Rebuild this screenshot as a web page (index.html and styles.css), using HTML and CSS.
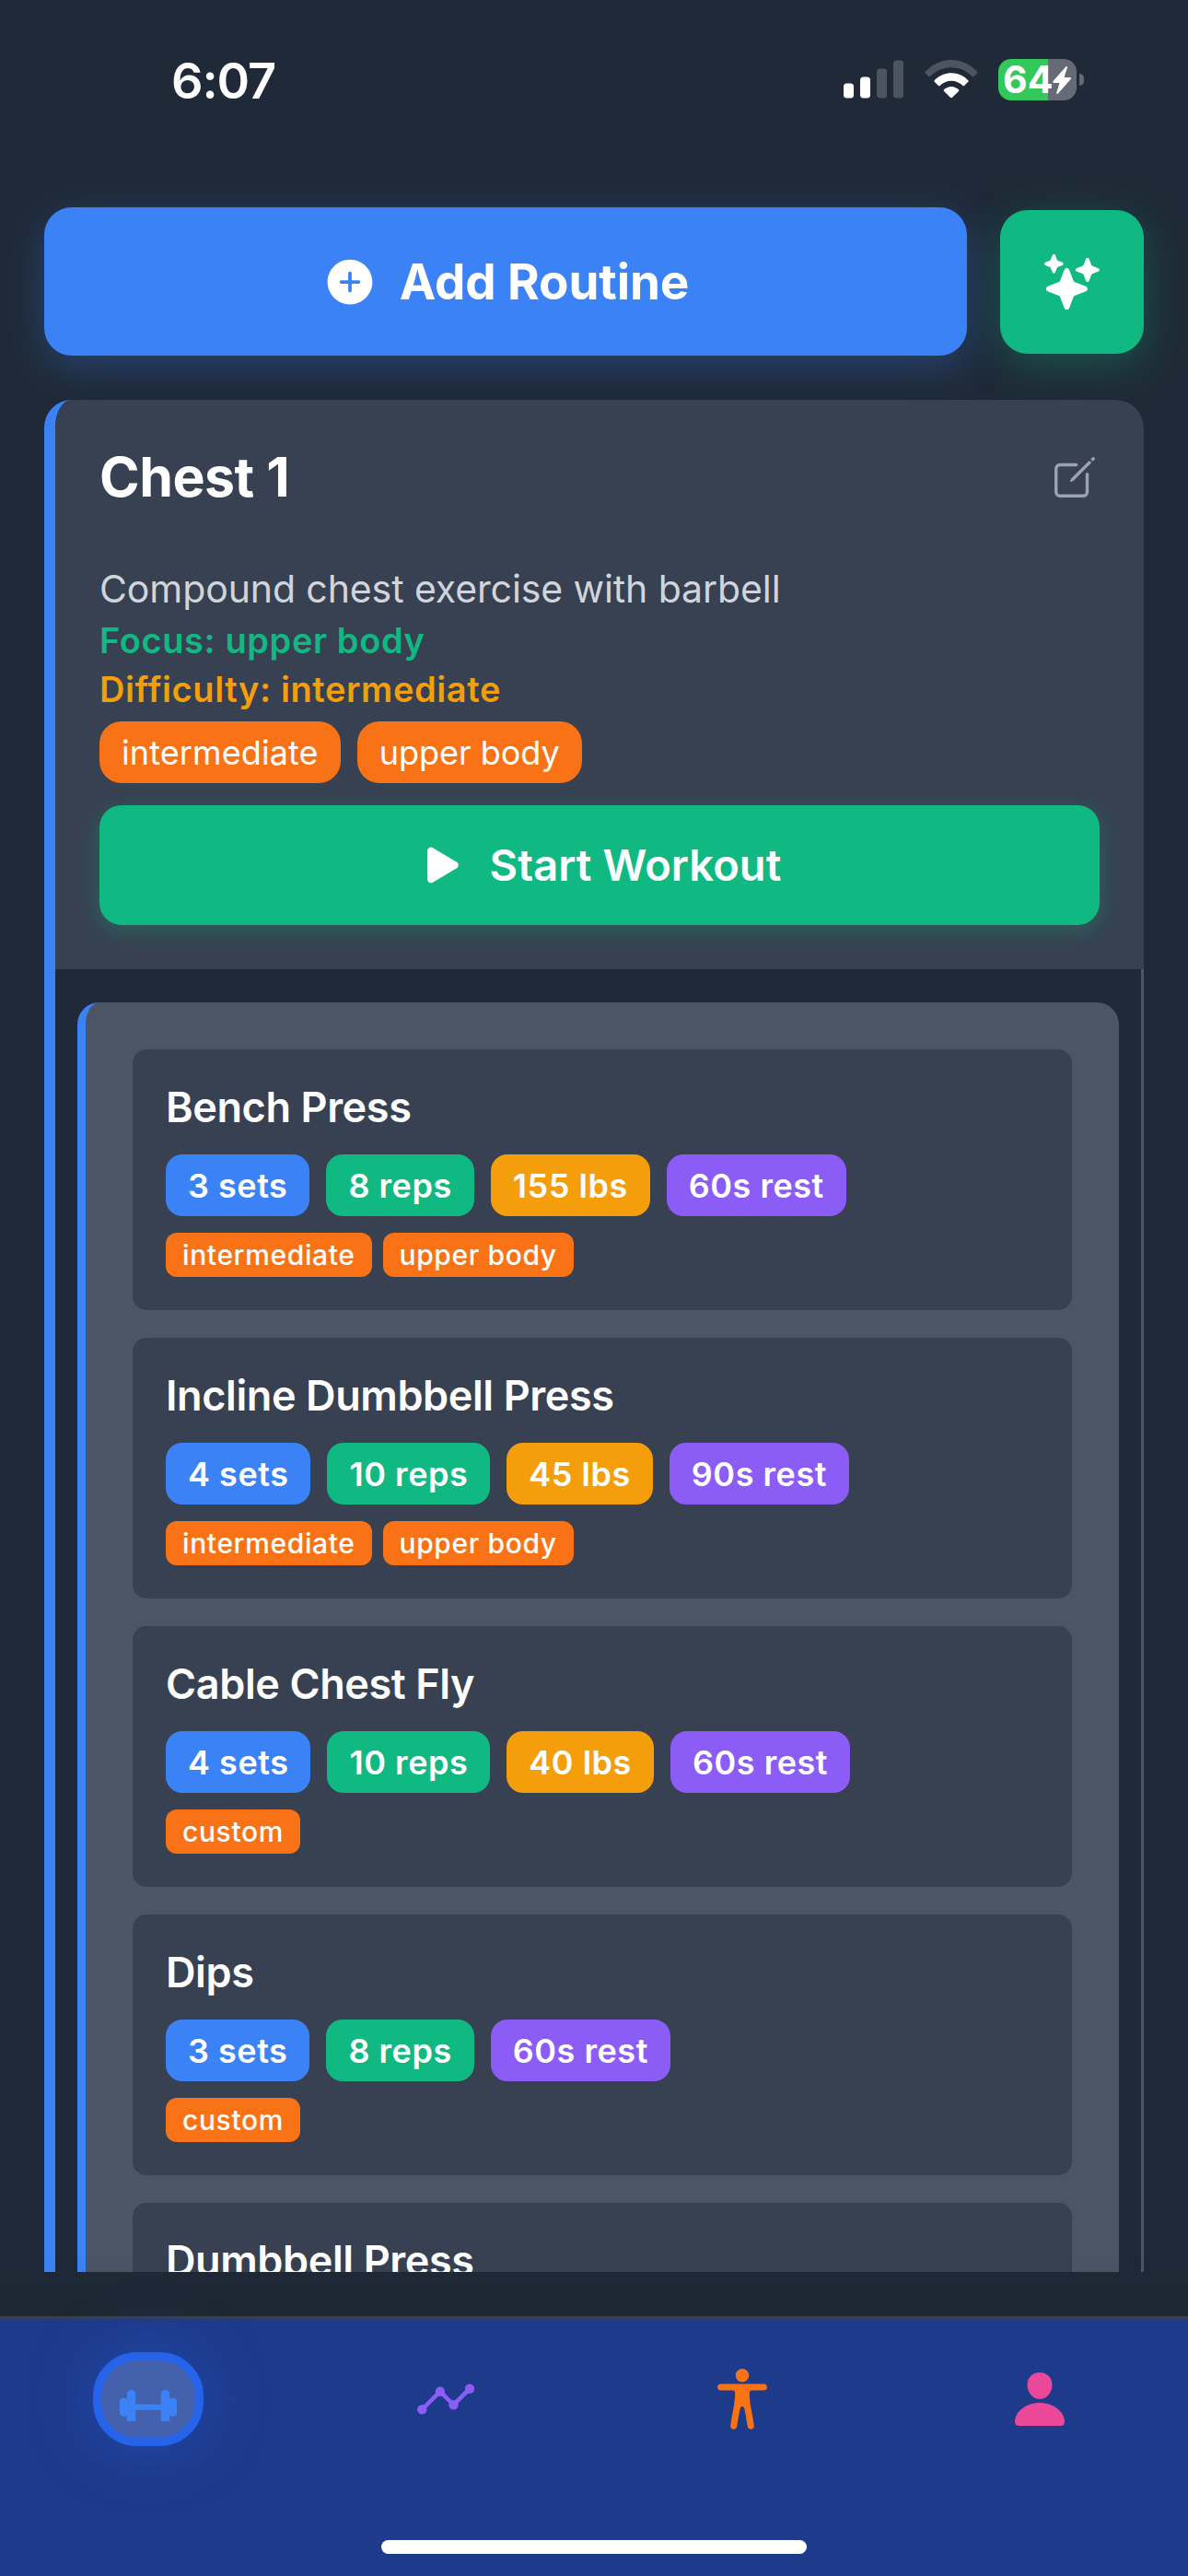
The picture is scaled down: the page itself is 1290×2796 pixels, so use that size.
FILE: index.html
```html
<!DOCTYPE html>
<html lang="en">
<head>
<meta charset="utf-8">
<title>Routines</title>
<link rel="stylesheet" href="styles.css">
</head>
<body>
<div class="screen">
  <header class="status">
    <span class="time">6:07</span>
    <div class="indicators">
      <svg class="signal" viewBox="0 0 66 42"><g fill="#fff"><rect y="25.500" width="11" height="16" rx="3.500"/><rect x="18" y="18.500" width="11" height="23" rx="3.500"/></g><g fill="#4b545f"><rect x="36" y="9.500" width="11" height="32" rx="3.500"/><rect x="54" y="0.500" width="11" height="41" rx="3.500"/></g></svg>
      <svg class="wifi" viewBox="0 0 58 43"><path fill="#4b545f" d="M.8 13.800C8.300 5.800 18.200 1 29 1s20.700 4.800 28.200 12.800c.5.600.5 1.200 0 1.700l-3.700 3.600c-.5.500-1.100.5-1.600 0C45.800 12.800 37.800 9.200 29 9.200S12.200 12.800 6.100 19.100c-.5.500-1.100.5-1.600 0L.8 15.500c-.5-.5-.5-1.100 0-1.700z"/><path fill="#fff" d="M10.700 23.200C15.500 18.300 21.900 15.300 29 15.300s13.500 3 18.300 7.900c.5.500.5 1.100 0 1.600L43 29c-.5.500-1.100.5-1.600 0-3.300-3.300-7.600-5.300-12.400-5.300s-9.100 2-12.400 5.300c-.5.500-1.100.5-1.600 0l-4.300-4.200c-.5-.5-.5-1.100 0-1.600z"/><path fill="#fff" d="M21 33.300c2.100-2 4.900-3.300 8-3.300s5.900 1.300 8 3.300c.5.500.5 1.100 0 1.600l-7.200 7c-.5.500-1.100.5-1.600 0l-7.200-7c-.5-.5-.5-1.100 0-1.600z"/></svg>
      <div class="battery">
        <div class="cell">
          <span class="level">64</span>
          <svg class="bolt" viewBox="0 0 20 30"><path fill="#fff" d="M14.300.6.600 16.100c-.8 1-.4 1.900.8 1.900h6.100L4.300 28.600c-.4 1.300.7 1.800 1.600.8L19.500 14c.8-1 .4-1.900-.8-1.900h-6.200L15.900 1.400C16.300.2 15.200-.4 14.300.6z"/></svg>
        </div>
        <div class="nub"></div>
      </div>
    </div>
  </header>

  <div class="actions">
    <div class="add">
      <svg class="add-icon" viewBox="0 0 512 512"><path fill="#fff" fill-rule="evenodd" d="M256 48C141.310 48 48 141.310 48 256s93.310 208 208 208 208-93.310 208-208S370.690 48 256 48zm80 224h-64v64a16 16 0 01-32 0v-64h-64a16 16 0 010-32h64v-64a16 16 0 0132 0v64h64a16 16 0 010 32z"/></svg>
      <span class="add-label">Add Routine</span>
    </div>
    <div class="ai">
      <svg class="ai-icon" viewBox="0 0 512 512"><path fill="#fff" d="M208 512a24.840 24.840 0 01-23.340-16l-39.840-103.600a16.060 16.060 0 00-9.190-9.190L32 343.340a25 25 0 010-46.680l103.600-39.840a16.060 16.060 0 009.190-9.190L184.660 144a25 25 0 0146.680 0l39.840 103.600a16.060 16.060 0 009.190 9.190l103 39.630A25.490 25.490 0 01400 320.520a24.820 24.820 0 01-16 22.820l-103.600 39.840a16.060 16.060 0 00-9.190 9.190L231.340 496A24.840 24.840 0 01208 512zM88 176a14.670 14.670 0 01-13.690-9.400l-16.860-43.840a7.280 7.280 0 00-4.210-4.210L9.400 101.690a14.670 14.670 0 010-27.380l43.840-16.860a7.310 7.310 0 004.210-4.210L74.160 9.790A15 15 0 0186.230.11a14.670 14.670 0 0115.460 9.290l16.860 43.840a7.310 7.310 0 004.210 4.210l43.840 16.860a14.670 14.670 0 010 27.380l-43.840 16.860a7.280 7.280 0 00-4.210 4.210l-16.860 43.840A14.670 14.670 0 0188 176zM400 256a16 16 0 01-14.930-10.260l-22.840-59.370a8 8 0 00-4.600-4.600l-59.370-22.840a16 16 0 010-29.860l59.370-22.840a8 8 0 004.600-4.600l22.670-58.950a16.450 16.450 0 0113.170-10.570 16 16 0 0116.860 10.150l22.840 59.370a8 8 0 004.600 4.600l59.370 22.840a16 16 0 010 29.860l-59.370 22.840a8 8 0 00-4.600 4.600l-22.840 59.370A16 16 0 01400 256z"/></svg>
    </div>
  </div>

  <main class="scroller">
    <section class="routine">
      <div class="summary">
        <div class="heading">
          <h1 class="name">Chest 1</h1>
          <svg class="edit" viewBox="0 0 512 512"><path fill="none" stroke="#9ca3af" stroke-width="32" stroke-linecap="round" stroke-linejoin="round" d="M384 224v184a40 40 0 01-40 40H104a40 40 0 01-40-40V168a40 40 0 0140-40h167.480"/><path fill="#9ca3af" d="M459.940 53.250a16.060 16.060 0 00-23.220-.56L424.350 65a8 8 0 000 11.310l11.340 11.320a8 8 0 0011.340 0l12.060-12c6.100-6.090 6.670-16.010.85-22.380zM399.340 90L218.820 270.200a9 9 0 00-2.310 3.930L208.160 299a3.910 3.910 0 004.860 4.860l24.850-8.350a9 9 0 003.930-2.310L422 112.660a9 9 0 000-12.660l-9.950-10a9 9 0 00-12.710 0z"/></svg>
        </div>
        <p class="description">Compound chest exercise with barbell</p>
        <p class="meta focus">Focus: upper body</p>
        <p class="meta difficulty">Difficulty: intermediate</p>
        <div class="labels"><span class="label">intermediate</span><span class="label">upper body</span></div>
        <div class="start">
          <svg class="play" viewBox="0 0 512 512"><path fill="#fff" d="M133 440a35.370 35.370 0 01-17.500-4.670c-12-6.800-19.460-20-19.460-34.330V111c0-14.370 7.460-27.530 19.460-34.330a35.130 35.130 0 0135.770.45l247.850 148.360a36 36 0 010 61l-247.890 148.400A35.500 35.500 0 01133 440z"/></svg>
          <span class="start-label">Start Workout</span>
        </div>
      </div>
      <div class="body">
        <div class="exercises">
          <article class="exercise">
            <h2 class="title">Bench Press</h2>
            <div class="chips"><span class="chip sets">3 sets</span><span class="chip reps">8 reps</span><span class="chip weight">155 lbs</span><span class="chip rest">60s rest</span></div>
            <div class="tags"><span class="tag">intermediate</span><span class="tag">upper body</span></div>
          </article>
          <article class="exercise">
            <h2 class="title">Incline Dumbbell Press</h2>
            <div class="chips"><span class="chip sets">4 sets</span><span class="chip reps">10 reps</span><span class="chip weight">45 lbs</span><span class="chip rest">90s rest</span></div>
            <div class="tags"><span class="tag">intermediate</span><span class="tag">upper body</span></div>
          </article>
          <article class="exercise">
            <h2 class="title">Cable Chest Fly</h2>
            <div class="chips"><span class="chip sets">4 sets</span><span class="chip reps">10 reps</span><span class="chip weight">40 lbs</span><span class="chip rest">60s rest</span></div>
            <div class="tags"><span class="tag">custom</span></div>
          </article>
          <article class="exercise">
            <h2 class="title">Dips</h2>
            <div class="chips"><span class="chip sets">3 sets</span><span class="chip reps">8 reps</span><span class="chip rest">60s rest</span></div>
            <div class="tags"><span class="tag">custom</span></div>
          </article>
          <article class="exercise">
            <h2 class="title">Dumbbell Press</h2>
          </article>
        </div>
      </div>
    </section>
  </main>

  <nav class="tabbar">
    <div class="tabs">
      <div class="tab"><div class="active">
        <svg class="dumbbell" viewBox="0 0 62 34"><g fill="#3b82f6"><rect y="8.700" width="9" height="20" rx="4"/><path d="M7.700 34V4.700a4.800 4.800 0 019.600 0V34zM44.700 34V4.700a4.800 4.800 0 019.600 0V34z"/><path d="M5 12h5v14H5zM52 12h5v14h-5zM17 15.700h28v6H17z"/><rect x="53" y="8.700" width="9" height="20" rx="4"/></g></svg>
      </div></div>
      <div class="tab"><svg class="tab-icon" viewBox="0 0 72 72"><g fill="#8b5cf6"><circle cx="10.300" cy="47.300" r="5.200"/><circle cx="29.900" cy="27.700" r="5.200"/><circle cx="44.500" cy="42.200" r="5.200"/><circle cx="62" cy="24.700" r="5.200"/></g><path d="M10.300 47.300 29.900 27.700 44.500 42.200 62 24.700" fill="none" stroke="#8b5cf6" stroke-width="4.500"/></svg></div>
      <div class="tab"><svg class="tab-icon" viewBox="0 0 72 72"><g fill="#f97316"><circle cx="36" cy="10.300" r="7.200"/><path d="M12.700 19.400h46.600a3.600 3.600 0 010 7.200H46.500c-1.900 0-2.700 1.300-2.700 3.200 0 11 3.300 21.600 5 35.300a3.500 3.500 0 01-6.900 1L39 49.500c-.7-4-1.600-5.400-3-5.400s-2.300 1.400-3 5.400l-2.900 16.600a3.500 3.500 0 01-6.900-1c1.700-13.700 5-24.300 5-35.300 0-1.900-.8-3.200-2.700-3.200H12.700a3.600 3.600 0 010-7.200z"/></g></svg></div>
      <div class="tab"><svg class="tab-icon" viewBox="0 0 72 72"><g fill="#ec4899"><path d="M36 7c7.600 0 13.500 5.600 13.500 13.400C49.500 28.700 43.400 36 36 36s-13.500-7.300-13.500-15.600C22.500 12.600 28.400 7 36 7z"/><path d="M36 40c15.500 0 27 10.500 27 20.500 0 3-1.700 4.500-4.500 4.500h-45C10.700 65 9 63.500 9 60.500 9 50.500 20.500 40 36 40z"/></g></svg></div>
    </div>
    <div class="home-indicator"></div>
  </nav>
</div>
</body>
</html>
```
FILE: styles.css
```css
* { box-sizing: border-box; margin: 0; padding: 0; }
body {
  width: 1290px;
  height: 2796px;
  overflow: hidden;
  background: #1f2937;
  color: #fff;
  font-family: Inter, "Liberation Sans", sans-serif;
}
svg { display: block; flex: none; }
span, h1, h2, p { white-space: nowrap; }
.screen { display: flex; flex-direction: column; height: 2796px; }

/* status bar */
.status {
  display: flex;
  justify-content: space-between;
  align-items: flex-start;
  height: 225px;
  padding: 64px 113px 0 186px;
}
.time { font-size: 54px; line-height: 48px; font-weight: 600; letter-spacing: -1.1px; }
.indicators { display: flex; align-items: flex-start; }
.signal { width: 66px; height: 42px; margin: 1px 22px 0 0; }
.wifi { width: 58px; height: 43px; margin-right: 22px; }
.battery { display: flex; align-items: center; gap: 3px; }
.cell {
  display: flex;
  align-items: center;
  width: 85px;
  height: 45px;
  padding-left: 5px;
  border-radius: 14px;
  background: linear-gradient(90deg, #34c759 54px, #656b76 54px);
}
.level { width: 54px; font-size: 41px; line-height: 45px; font-weight: 700; }
.bolt { width: 20px; height: 30px; }
.nub { width: 5px; height: 13px; border-radius: 0 5px 5px 0; background: #656b76; }

/* top actions */
.actions { display: flex; align-items: center; gap: 36px; height: 161px; margin: 0 48px 48px; }
.add {
  display: flex;
  flex: 1;
  align-items: center;
  justify-content: center;
  gap: 24px;
  height: 161px;
  border-radius: 30px;
  background: #3b82f6;
  box-shadow: 0 12px 48px rgba(59, 130, 246, 0.3);
}
.add-icon { width: 60px; height: 60px; }
.add-label { font-size: 53px; line-height: 64px; font-weight: 700; letter-spacing: -0.1px; }
.ai {
  display: flex;
  align-items: center;
  justify-content: center;
  width: 156px;
  height: 156px;
  border-radius: 30px;
  background: #10b981;
  box-shadow: 0 12px 48px rgba(16, 185, 129, 0.3);
}
.ai-icon { width: 60px; height: 60px; }

/* routine card */
.scroller { flex: 1; min-height: 0; overflow: hidden; margin-bottom: 48px; padding: 0 48px; }
.routine { border-left: 12px solid #3b82f6; border-radius: 30px 30px 0 0; background: #1f2937; }
.summary { padding: 48px; border-radius: 0 30px 0 0; background: #374151; }
.routine, .summary { overflow: hidden; }
.heading { display: flex; align-items: center; justify-content: space-between; height: 72px; margin-bottom: 56px; }
.name { font-size: 59px; line-height: 72px; font-weight: 700; letter-spacing: -0.5px; }
.edit { width: 54px; height: 54px; }
.description { margin-bottom: 1px; font-size: 41px; line-height: 58px; color: #d1d5db; letter-spacing: -0.1px; }
.meta { font-size: 38px; line-height: 53px; font-weight: 600; letter-spacing: 0.6px; }
.focus { color: #10b981; }
.difficulty { color: #f59e0b; }
.labels { display: flex; gap: 18px; margin-top: 8px; }
.label { padding: 2px 24px 0; border-radius: 24px; background: #f97316; font-size: 36px; line-height: 65px; }
.label:first-child { letter-spacing: 0.1px; }
.start {
  display: flex;
  align-items: center;
  justify-content: center;
  gap: 24px;
  height: 130px;
  margin-top: 24px;
  border-radius: 24px;
  background: #10b981;
  box-shadow: 0 6px 24px rgba(16, 185, 129, 0.3);
}
.play { width: 54px; height: 54px; }
.start-label { font-size: 47px; line-height: 58px; font-weight: 600; letter-spacing: 0.1px; }

/* exercises */
.body { padding: 36px 24px 36px; border-right: 3px solid #4b5563; }
.exercises {
  display: flex;
  flex-direction: column;
  gap: 24px;
  padding: 48px;
  border-left: 9px solid #3b82f6;
  border-radius: 24px;
  background: #4b5563;
}
.exercise { min-height: 289px; padding: 36px; border: 3px solid #4b5563; border-radius: 18px; background: #374151; }
.title { font-size: 45px; line-height: 54px; font-weight: 600; letter-spacing: -0.4px; }
.chips { display: flex; gap: 18px; margin-top: 24px; }
.chip { padding: 2px 24px 0; border-radius: 18px; font-size: 36px; line-height: 65px; font-weight: 600; letter-spacing: 0.53px; }
.sets { background: #3b82f6; }
.reps { background: #10b981; }
.weight { background: #f59e0b; }
.rest { background: #8b5cf6; }
.tags { display: flex; gap: 12px; margin-top: 18px; }
.tag { padding: 0 18px; border-radius: 12px; background: #f97316; font-size: 30px; line-height: 48px; font-weight: 500; letter-spacing: 0.62px; }

/* tab bar */
.tabbar {
  display: flex;
  flex-direction: column;
  justify-content: space-between;
  align-items: center;
  height: 282px;
  padding: 36px 0 24px;
  border-top: 3px solid #374151;
  background: #1e3a8a;
  box-shadow: 0 -12px 36px rgba(30, 40, 45, 0.5);
}
.tabs { display: flex; width: 100%; }
.tab { display: flex; flex: 1; align-items: center; justify-content: center; height: 102px; }
.active {
  display: flex;
  align-items: flex-end;
  justify-content: center;
  width: 120px;
  height: 102px;
  padding-bottom: 18px;
  border: 9px solid #2563eb;
  border-radius: 48px;
  background: #4361ad;
  box-shadow: 0 0 72px rgba(37, 99, 235, 0.4);
}
.dumbbell { width: 62px; height: 34px; }
.tab-icon { width: 72px; height: 72px; }
.home-indicator { width: 462px; height: 15px; border-radius: 8px; background: #fff; }
```
